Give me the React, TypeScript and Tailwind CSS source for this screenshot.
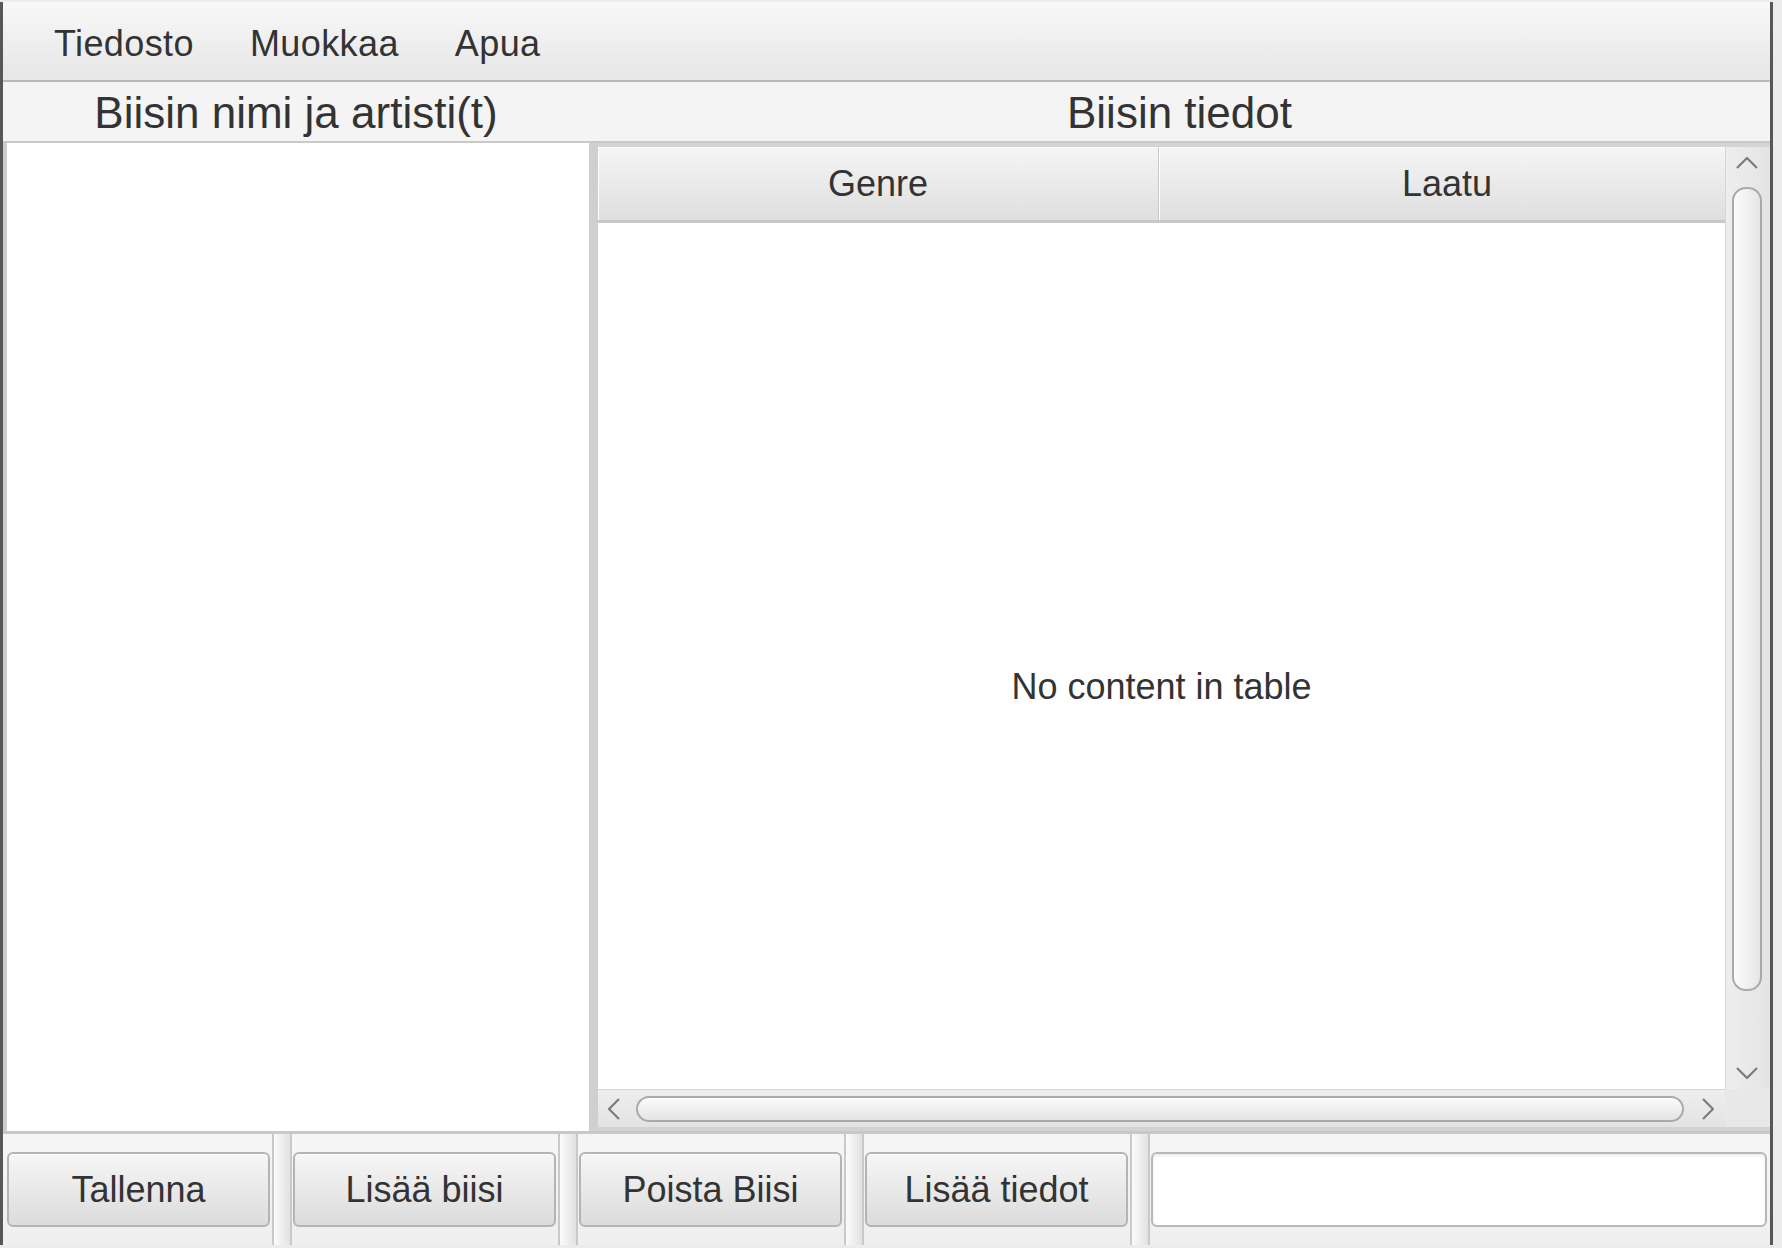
import React from "react";

function Chevron({ dir }: { dir: "up" | "down" | "left" | "right" }) {
  if (dir === "up" || dir === "down") {
    const pts = dir === "up" ? "1,11 11,1 21,11" : "1,1 11,11 21,1";
    return (
      <svg width="22" height="12" viewBox="0 0 22 12" className="block">
        <polyline points={pts} fill="none" stroke="#7c7c7c" strokeWidth="2.2" strokeLinejoin="miter" />
      </svg>
    );
  }
  const pts = dir === "left" ? "11,1 1,11 11,21" : "1,1 11,11 1,21";
  return (
    <svg width="12" height="22" viewBox="0 0 12 22" className="block">
      <polyline points={pts} fill="none" stroke="#7c7c7c" strokeWidth="2.2" strokeLinejoin="miter" />
    </svg>
  );
}

function ToolButton({ label }: { label: string }) {
  return (
    <div className="w-[263px] h-[75px] shrink-0 rounded-[6px] border-2 border-[#b4b4b4] bg-gradient-to-b from-[#f6f6f6] to-[#dcdcdc] shadow-[inset_0_1px_0_#ffffff] flex items-center justify-center text-[36px] leading-none text-[#333333]">
      {label}
    </div>
  );
}

function Separator() {
  return (
    <div className="self-stretch w-[20px] ml-[2px] mr-[1px] shrink-0 border-x-2 border-[#c9c9c9] bg-gradient-to-r from-[#fbfbfb] to-[#e2e2e2]" />
  );
}

export default function App() {
  return (
    <div className="w-[1782px] h-[1248px] bg-[#ececec] pt-[2px] font-['Liberation_Sans',Arial,sans-serif] text-[#333333] overflow-hidden">
      <div className="w-[1773px] h-[1243px] flex flex-col border-l-[3px] border-r-[3px] border-[#575757] bg-[#f4f4f4]">
        {/* Menu bar */}
        <div className="h-[80px] shrink-0 border-b-2 border-[#b9b9b9] bg-gradient-to-b from-[#f8f8f8] to-[#e6e6e6] flex items-center pl-[51px] pt-[5px] gap-[56px] text-[36px] tracking-[0.4px] leading-none">
          <span>Tiedosto</span>
          <span>Muokkaa</span>
          <span>Apua</span>
        </div>

        {/* Header labels */}
        <div className="h-[61px] shrink-0 border-b-2 border-[#c9c9c9] bg-[#f4f4f4] grid grid-cols-[586px_1fr] items-center pt-[2px] text-[44px] leading-none">
          <div className="text-center">Biisin nimi ja artisti(t)</div>
          <div className="text-center">Biisin tiedot</div>
        </div>

        {/* Main area */}
        <div className="h-[988px] shrink-0 flex">
          <div className="w-[586px] h-full bg-white border-l-[4px] border-[#cdcdcd]" />
          <div className="w-[9px] h-full bg-[#cfcfcf]" />
          <div className="w-[1172px] h-full flex flex-col pt-[4px] bg-[#d4d4d4]">
            <div className="h-[942px] flex">
              {/* table */}
              <div className="w-[1127px] h-full flex flex-col bg-white">
                <div className="h-[76px] shrink-0 flex border-b-[3px] border-[#c8c8c8] text-[36px] leading-none">
                  <div className="w-[561px] h-full flex items-center justify-center border-r border-[#c8c8c8] bg-gradient-to-b from-[#f5f5f5] to-[#dfdfdf] shadow-[inset_1px_1px_0_#ffffff]">
                    Genre
                  </div>
                  <div className="flex-1 h-full flex items-center justify-center pl-[10px] bg-gradient-to-b from-[#f5f5f5] to-[#dfdfdf] shadow-[inset_1px_1px_0_#ffffff]">
                    Laatu
                  </div>
                </div>
                <div className="flex-1 flex items-center justify-center pt-[62px] text-[36px] leading-none">
                  No content in table
                </div>
              </div>
              {/* vertical scrollbar */}
              <div className="w-[45px] h-full flex flex-col items-center bg-gradient-to-r from-[#eeeeee] to-[#e4e4e4] border-l border-[#d6d6d6] pt-[10px] pr-[2px]">
                <Chevron dir="up" />
                <div className="mt-[18px] w-[30px] h-[804px] rounded-[14px] border-2 border-[#aaaaaa] bg-gradient-to-r from-[#fcfcfc] to-[#e6e6e6]" />
                <div className="mt-[76px]">
                  <Chevron dir="down" />
                </div>
              </div>
            </div>
            {/* horizontal scrollbar row */}
            <div className="h-[42px] flex border-b-[4px] border-[#d2d2d2]">
              <div className="w-[1127px] h-full flex items-center bg-gradient-to-b from-[#eeeeee] to-[#e3e3e3] border-t border-[#d6d6d6] pl-[10px]">
                <Chevron dir="left" />
                <div className="ml-[16px] w-[1048px] h-[26px] rounded-[13px] border-2 border-[#aaaaaa] bg-gradient-to-b from-[#fcfcfc] to-[#e4e4e4]" />
                <div className="ml-[18px]">
                  <Chevron dir="right" />
                </div>
              </div>
              <div className="w-[45px] h-full bg-[#e8e8e8]" />
            </div>
          </div>
        </div>

        {/* Bottom toolbar */}
        <div className="flex-1 flex items-center border-t-[3px] border-[#c8c8c8] bg-gradient-to-b from-[#f6f6f6] to-[#efefef] pl-[4px]">
          <ToolButton label="Tallenna" />
          <Separator />
          <ToolButton label="Lisää biisi" />
          <Separator />
          <ToolButton label="Poista Biisi" />
          <Separator />
          <ToolButton label="Lisää tiedot" />
          <Separator />
          <div className="w-[616px] h-[75px] shrink-0 bg-white border-2 border-[#b8b8b8] rounded-[6px] shadow-[inset_0_2px_3px_rgba(0,0,0,0.08)]" />
        </div>
      </div>
    </div>
  );
}
